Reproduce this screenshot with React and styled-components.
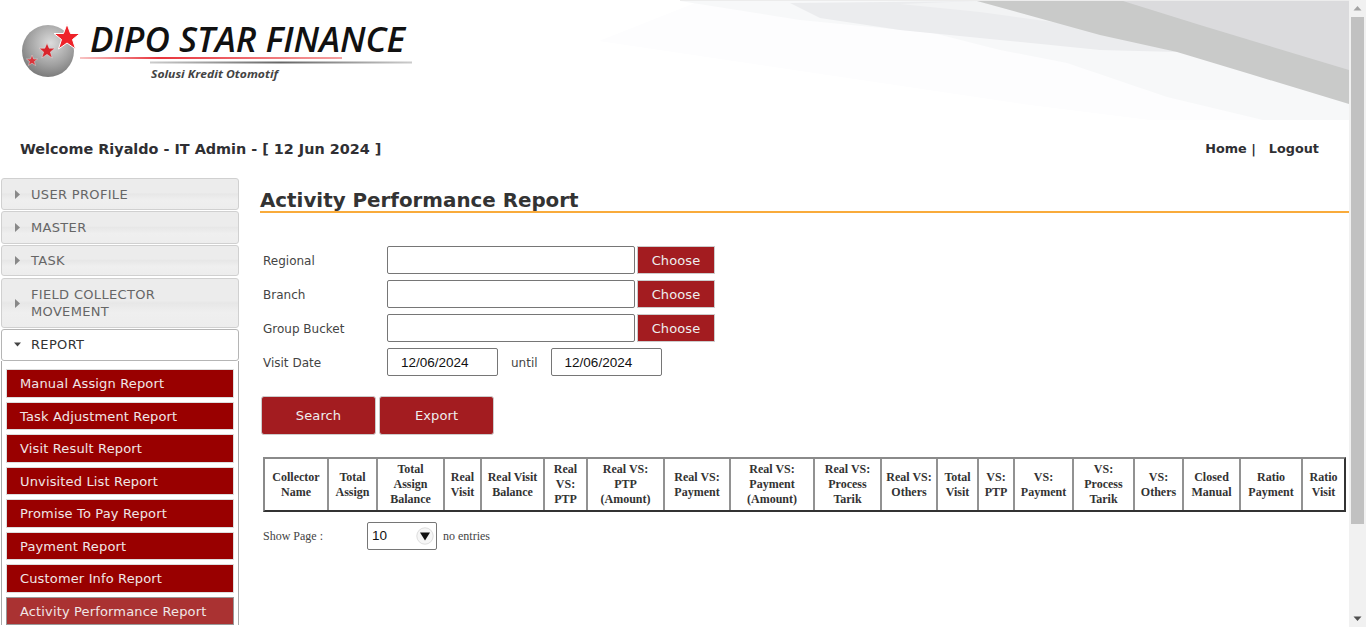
import React from 'react';
import styled, { createGlobalStyle } from 'styled-components';

const GlobalStyle = createGlobalStyle`
  html, body {
    margin: 0;
    padding: 0;
    height: 100%;
    overflow: hidden;
    background: #fff;
  }
`;

const Shell = styled.div`
  display: flex;
  width: 1366px;
  height: 627px;
  overflow: hidden;
  font-family: 'DejaVu Sans', Verdana, sans-serif;
  font-size: 13px;
  color: #333;
`;

const Page = styled.div`
  width: 1349px;
  flex: none;
`;

const Header = styled.header`
  display: flex;
  justify-content: space-between;
  height: 120px;
`;

const LogoArt = styled.svg`
  width: 500px;
  height: 120px;
  flex: none;
`;

const SwooshArt = styled.svg`
  width: 750px;
  height: 120px;
  flex: none;
`;

const WelcomeBar = styled.div`
  display: flex;
  justify-content: space-between;
  align-items: center;
  height: 58px;
  padding: 0 30px 0 20px;
  font-size: 14.4px;
  font-weight: bold;
  color: #2f2f33;
`;

const TopLinks = styled.div`
  display: flex;
  gap: 13px;
  padding-bottom: 2px;
  font-size: 12.8px;
`;

const Body = styled.div`
  display: flex;
  align-items: flex-start;
`;

const Sidebar = styled.nav`
  width: 238px;
  margin-left: 1px;
  flex: none;
`;

const MenuItem = styled.div`
  display: flex;
  align-items: center;
  gap: 10px;
  box-sizing: border-box;
  min-height: ${p => p.$height}px;
  margin-bottom: ${p => p.$gap}px;
  padding: 0 14px ${p => (p.$open ? 2 : 0)}px 12px;
  border: 1px solid ${p => (p.$open ? '#b5b5b5' : '#d0d0d0')};
  border-radius: 3px;
  background: ${p =>
    p.$open ? '#fff' : 'linear-gradient(#ececec 0%, #ececec 45%, #e7e7e7 50%, #efefef 70%, #ededed 100%)'};
  color: ${p => (p.$open ? '#333' : '#666')};
  line-height: 17px;
  letter-spacing: 0.33px;
`;

const Caret = styled.svg`
  width: 7px;
  height: 9px;
  flex: none;
  fill: ${p => (p.$open ? '#444' : '#888')};
`;

const SubMenu = styled.div`
  display: flex;
  flex-direction: column;
  gap: 4px;
  padding: 8px 4px 0;
  border-left: 1px solid #aaa;
  border-right: 1px solid #aaa;
`;

const SubLink = styled.a`
  display: flex;
  align-items: center;
  box-sizing: border-box;
  height: 28.5px;
  padding: 1px 0 0 13px;
  border: 1px solid ${p => (p.$active ? '#999' : '#ddd')};
  background: ${p => (p.$active ? '#aa3232' : '#990000')};
  color: #f0e6e6;
  letter-spacing: 0.15px;
`;

const Main = styled.main`
  flex: 1;
  min-width: 0;
  margin-left: 21px;
  padding-top: 8px;
`;

const Title = styled.h1`
  margin: 0;
  height: 25px;
  border-bottom: 2px solid #f9ab3b;
  font-size: 19.85px;
  line-height: 29px;
  font-weight: bold;
  color: #333;
`;

const FilterForm = styled.form`
  display: flex;
  flex-direction: column;
  gap: 6px;
  margin: 33px 0 0 3px;
`;

const FormRow = styled.div`
  display: flex;
  align-items: center;
  height: 28px;
`;

const FieldLabel = styled.label`
  width: 124px;
  flex: none;
  padding-top: 2px;
  font-size: 12px;
  color: #444;
`;

const TextField = styled.input`
  box-sizing: border-box;
  width: ${p => p.$width}px;
  height: 28px;
  padding: 0 0 0 13px;
  border: 1px solid #767676;
  border-radius: 2px;
  background: #fff;
  font-family: 'Liberation Sans', Arial, sans-serif;
  font-size: 13.5px;
  color: #111;
  outline: none;
`;

const ChooseButton = styled.button`
  box-sizing: border-box;
  width: 78px;
  height: 28px;
  margin-left: 2px;
  padding: 0;
  border: 1px solid #ccc;
  background: #a31c20;
  color: #eee;
  font: 13px 'DejaVu Sans', Verdana, sans-serif;
  letter-spacing: 0.1px;
`;

const Until = styled.span`
  margin: 0 13px 0 13px;
  padding-top: 2px;
  color: #444;
  font-size: 12px;
`;

const ActionRow = styled.div`
  display: flex;
  gap: 3px;
  margin: 20px 0 0 1px;
`;

const ActionButton = styled.button`
  box-sizing: border-box;
  width: 115px;
  height: 39px;
  padding: 0;
  border: 1px solid #ccc;
  border-radius: 3px;
  background: #a31c20;
  color: #eee;
  font: 13px 'DejaVu Sans', Verdana, sans-serif;
  letter-spacing: 0.1px;
`;

const ReportTable = styled.table`
  box-sizing: border-box;
  width: 1083px;
  margin: 22px 0 0 3px;
  table-layout: fixed;
  border-collapse: separate;
  border-spacing: 0;
  border: 2px solid;
  border-color: #8a8a8a #333 #333 #8a8a8a;
`;

const HeadCell = styled.th`
  padding: 0 3px;
  height: 51px;
  border-right: 2px solid #929292;
  font-family: 'Liberation Serif', 'Times New Roman', serif;
  font-size: 12px;
  line-height: 15px;
  font-weight: bold;
  color: #333;
  text-align: center;
  &:last-child {
    border-right: 0;
  }
`;

const Pager = styled.div`
  display: flex;
  align-items: center;
  margin: 10px 0 0 3px;
  font-family: 'Liberation Serif', 'Times New Roman', serif;
  font-size: 12px;
  color: #444;
`;

const PagerLabel = styled.span`
  width: 104px;
  flex: none;
`;

const PageSelect = styled.div`
  display: flex;
  align-items: center;
  justify-content: space-between;
  box-sizing: border-box;
  width: 70px;
  height: 28px;
  margin-right: 6px;
  padding: 0 2px 1px 4px;
  border: 1px solid #767676;
  border-radius: 2px;
  font-family: 'Liberation Sans', Arial, sans-serif;
  font-size: 13.5px;
  color: #111;
`;

const SelectArrow = styled.svg`
  width: 18px;
  height: 18px;
`;

const Scrollbar = styled.div`
  display: flex;
  flex-direction: column;
  align-items: center;
  width: 17px;
  height: 627px;
  flex: none;
  background: #f1f1f1;
`;

const ScrollEnd = styled.svg`
  width: 17px;
  height: 17px;
  flex: none;
  fill: ${p => (p.$dark ? '#505050' : '#a3a3a3')};
`;

const ScrollThumb = styled.div`
  width: 13px;
  height: 507px;
  background: #c1c1c1;
`;

const ScrollGap = styled.div`
  flex: 1;
`;

const menu = [
  { label: 'USER PROFILE', height: 32, gap: 1 },
  { label: 'MASTER', height: 33, gap: 1 },
  { label: 'TASK', height: 31, gap: 2 },
  { label: 'FIELD COLLECTOR MOVEMENT', height: 50, gap: 1 },
];

const reports = [
  'Manual Assign Report',
  'Task Adjustment Report',
  'Visit Result Report',
  'Unvisited List Report',
  'Promise To Pay Report',
  'Payment Report',
  'Customer Info Report',
  'Activity Performance Report',
];

const columns = [
  ['Collector Name', 64],
  ['Total Assign', 49],
  ['Total Assign Balance', 67],
  ['Real Visit', 37],
  ['Real Visit Balance', 63],
  ['Real VS: PTP', 43],
  ['Real VS: PTP (Amount)', 77],
  ['Real VS: Payment', 66],
  ['Real VS: Payment (Amount)', 84],
  ['Real VS: Process Tarik', 67],
  ['Real VS: Others', 56],
  ['Total Visit', 41],
  ['VS: PTP', 36],
  ['VS: Payment', 59],
  ['VS: Process Tarik', 61],
  ['VS: Others', 49],
  ['Closed Manual', 57],
  ['Ratio Payment', 62],
  ['Ratio Visit', 41],
];

const filters = ['Regional', 'Branch', 'Group Bucket'];

const Logo = () => (
  <LogoArt viewBox="0 0 500 120">
    <defs>
      <radialGradient id="globe" cx="0.55" cy="0.35" r="0.75">
        <stop offset="0" stopColor="#dcdcdc" />
        <stop offset="0.55" stopColor="#a2a2a2" />
        <stop offset="1" stopColor="#6c6c6c" />
      </radialGradient>
      <linearGradient id="redLine" x1="0" x2="1" y1="0" y2="0">
        <stop offset="0" stopColor="#f8c4c4" />
        <stop offset="0.3" stopColor="#e8343c" />
        <stop offset="1" stopColor="#f4a0a0" />
      </linearGradient>
      <linearGradient id="greyLine" x1="0" x2="1" y1="0" y2="0">
        <stop offset="0" stopColor="#ccc" />
        <stop offset="0.5" stopColor="#666" />
        <stop offset="1" stopColor="#ccc" />
      </linearGradient>
    </defs>
    <circle cx="48" cy="51" r="26" fill="url(#globe)" />
    <polygon points="67,24 70.5,33.5 80,33.5 72.5,39.5 75.5,49 67,43 58.5,49 61.5,39.5 54,33.5 63.5,33.5" fill="#ee2229" stroke="#fff" strokeWidth="1" />
    <polygon points="47,43 49.2,48.2 55,48.2 50.4,52 52.2,58 47,54.4 41.8,58 43.6,52 39,48.2 44.8,48.2" fill="#d9242b" stroke="#ddd" strokeWidth="0.6" />
    <polygon points="32,55 33.6,59 37.6,59 34.4,61.6 35.6,65.5 32,63.2 28.4,65.5 29.6,61.6 26.4,59 30.4,59" fill="#d9343a" stroke="#ddd" strokeWidth="0.5" />
    <text x="90" y="52" fontFamily="'Open Sans', 'Liberation Sans', sans-serif" fontStyle="italic" fontWeight="600" fontSize="35" fill="#111" textLength="315" lengthAdjust="spacingAndGlyphs">
      DIPO STAR FINANCE
    </text>
    <rect x="80" y="57" width="262" height="2" fill="url(#redLine)" />
    <rect x="150" y="61.5" width="262" height="2" fill="url(#greyLine)" />
    <text x="151" y="78" fontFamily="'Open Sans', 'Liberation Sans', sans-serif" fontStyle="italic" fontWeight="700" fontSize="11" fill="#444" textLength="127" lengthAdjust="spacingAndGlyphs">
      Solusi Kredit Otomotif
    </text>
  </LogoArt>
);

const Swoosh = () => (
  <SwooshArt viewBox="599 0 750 120">
    <polygon points="599,41 700,1 1349,1 1349,120 1150,120 1030,105" fill="#fdfdfe" />
    <polygon points="680,1 1349,1 1349,120 1263,120 1167,97 1067,63 1000,50 933,33 800,20" fill="#f7f8f9" />
    <polygon points="790,3 977,1 1177,52 1100,50 1000,40 900,30 820,18" fill="#ebecee" />
    <polygon points="900,4 977,1 1060,23 980,12" fill="#f2f3f4" />
    <polygon points="977,1 1349,1 1349,104 1250,74 1177,52 1100,35" fill="#c9cac9" />
    <polygon points="1123,1 1349,1 1349,70 1200,25" fill="#dbdbdd" />
    <rect x="680" y="0" width="669" height="1" fill="#ececec" />
  </SwooshArt>
);

const App = () => (
  <Shell>
    <GlobalStyle />
    <Page>
      <Header>
        <Logo />
        <Swoosh />
      </Header>

      <WelcomeBar>
        <span>Welcome Riyaldo - IT Admin - [ 12 Jun 2024 ]</span>
        <TopLinks>
          <span>Home |</span>
          <span>Logout</span>
        </TopLinks>
      </WelcomeBar>

      <Body>
        <Sidebar>
          {menu.map(item => (
            <MenuItem key={item.label} $height={item.height} $gap={item.gap}>
              <Caret viewBox="0 0 7 9">
                <polygon points="1,0 6,4.5 1,9" />
              </Caret>
              <span>{item.label}</span>
            </MenuItem>
          ))}
          <MenuItem $open $height={32} $gap={0}>
            <Caret $open viewBox="0 0 7 9">
              <polygon points="0,2.5 7,2.5 3.5,6.5" />
            </Caret>
            <span>REPORT</span>
          </MenuItem>
          <SubMenu>
            {reports.map(name => (
              <SubLink key={name} $active={name === 'Activity Performance Report'}>
                {name}
              </SubLink>
            ))}
          </SubMenu>
        </Sidebar>

        <Main>
          <Title>Activity Performance Report</Title>

          <FilterForm>
            {filters.map(name => (
              <FormRow key={name}>
                <FieldLabel>{name}</FieldLabel>
                <TextField $width={248} readOnly />
                <ChooseButton type="button">Choose</ChooseButton>
              </FormRow>
            ))}
            <FormRow>
              <FieldLabel>Visit Date</FieldLabel>
              <TextField $width={111} readOnly value="12/06/2024" />
              <Until>until</Until>
              <TextField $width={111} readOnly value="12/06/2024" />
            </FormRow>
          </FilterForm>

          <ActionRow>
            <ActionButton type="button">Search</ActionButton>
            <ActionButton type="button">Export</ActionButton>
          </ActionRow>

          <ReportTable>
            <colgroup>
              {columns.map(([name, width]) => (
                <col key={name} width={width} />
              ))}
            </colgroup>
            <thead>
              <tr>
                {columns.map(([name]) => (
                  <HeadCell key={name}>{name}</HeadCell>
                ))}
              </tr>
            </thead>
          </ReportTable>

          <Pager>
            <PagerLabel>Show Page :</PagerLabel>
            <PageSelect>
              10
              <SelectArrow viewBox="0 0 18 18">
                <circle cx="9" cy="9" r="8.2" fill="#f6f6f6" stroke="#ddd" />
                <polygon points="4,5.5 14,5.5 9,13.5" fill="#111" />
              </SelectArrow>
            </PageSelect>
            <span>no entries</span>
          </Pager>
        </Main>
      </Body>
    </Page>

    <Scrollbar>
      <ScrollEnd viewBox="0 0 17 17">
        <polygon points="8.5,6 12.5,10.5 4.5,10.5" />
      </ScrollEnd>
      <ScrollThumb />
      <ScrollGap />
      <ScrollEnd $dark viewBox="0 0 17 17">
        <polygon points="4.5,6.5 12.5,6.5 8.5,11" />
      </ScrollEnd>
    </Scrollbar>
  </Shell>
);

export default App;
